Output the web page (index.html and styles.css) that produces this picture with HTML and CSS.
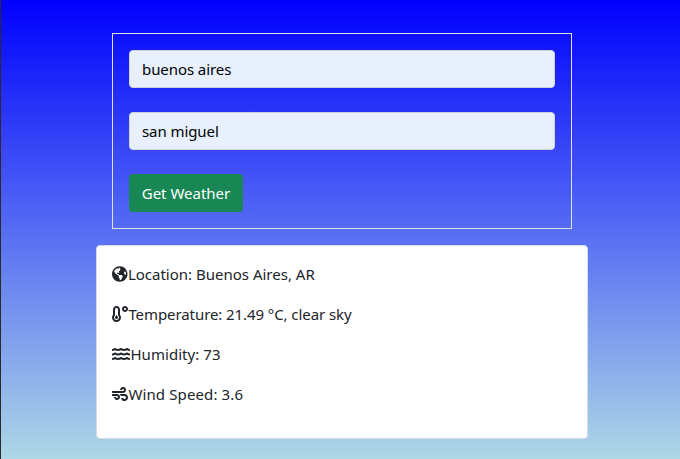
FILE: index.html
```html
<!DOCTYPE html>
<html lang="en">
<head>
<meta charset="utf-8">
<title>Weather</title>
<link rel="stylesheet" href="styles.css">
</head>
<body>
<main class="container">
  <form class="search">
    <input class="field" type="text" value="buenos aires" aria-label="City">
    <input class="field field-state" type="text" value="san miguel" aria-label="State">
    <button class="submit" type="button">Get Weather</button>
  </form>
  <section class="card">
    <p class="row"><svg class="icon icon-globe" viewBox="0 0 496 512"><path d="M248 8C111.03 8 0 119.03 0 256s111.03 248 248 248 248-111.03 248-248S384.97 8 248 8zm82.29 357.6c-3.9 3.88-7.99 7.95-11.31 11.28-2.99 3-5.1 6.7-6.17 10.71-1.51 5.66-2.73 11.38-4.77 16.87l-17.39 46.85c-13.76 3-28 4.69-42.65 4.69v-27.38c1.69-12.62-7.64-36.26-22.63-51.25-6-6-9.37-14.14-9.37-22.63v-32.01c0-11.64-6.27-22.34-16.46-27.97-14.37-7.95-34.81-19.06-48.81-26.11-11.48-5.78-22.1-13.14-31.65-21.75l-.8-.72a114.792 114.792 0 0 1-18.06-20.74c-9.38-13.77-24.66-36.42-34.59-51.14 20.47-45.5 57.36-82.04 103.2-101.89l24.01 12.01C203.48 89.74 216 82.01 216 70.11v-11.3c7.99-1.29 16.12-2.11 24.39-2.42l28.3 28.3c6.25 6.25 6.25 16.38 0 22.63L264 112l-10.34 10.34c-3.12 3.12-3.12 8.19 0 11.31l4.69 4.69c3.12 3.12 3.12 8.19 0 11.31l-8 8a8.008 8.008 0 0 1-5.66 2.34h-8.99c-2.08 0-4.08.81-5.58 2.27l-9.92 9.65a8.008 8.008 0 0 0-1.58 9.31l15.59 31.19c2.66 5.32-1.21 11.58-7.15 11.58h-5.64c-1.93 0-3.79-.7-5.24-1.96l-9.28-8.06a16.017 16.017 0 0 0-15.55-3.1l-31.17 10.39a11.95 11.95 0 0 0-8.17 11.34c0 4.53 2.56 8.66 6.61 10.69l11.08 5.54c9.41 4.71 19.79 7.16 30.31 7.16s22.59 27.29 32 32h66.75c8.49 0 16.62 3.37 22.63 9.37l13.69 13.69a30.503 30.503 0 0 1 8.93 21.57 46.536 46.536 0 0 1-13.72 32.98zM417 274.25c-5.79-1.45-10.84-5-14.15-9.97l-17.98-26.97a23.97 23.97 0 0 1 0-26.62l19.59-29.38c2.32-3.47 5.5-6.29 9.24-8.15l12.98-6.49C440.2 193.59 448 223.87 448 256c0 8.67-.74 17.16-1.82 25.54L417 274.25z"/></svg><span class="location">Location: Buenos Aires, AR</span></p>
    <p class="row"><svg class="icon" viewBox="0 0 512 512"><path d="M416 0c-52.9 0-96 43.1-96 96s43.1 96 96 96 96-43.1 96-96-43.1-96-96-96zm0 128c-17.7 0-32-14.3-32-32s14.3-32 32-32 32 14.3 32 32-14.3 32-32 32zm-160-16C256 50.1 205.9 0 144 0S32 50.1 32 112v166.5C12.3 303.2 0 334 0 368c0 79.5 64.5 144 144 144s144-64.5 144-144c0-34-12.3-64.9-32-89.5V112zM144 448c-44.1 0-80-35.9-80-80 0-25.5 12.2-48.9 32-63.8V112c0-26.5 21.5-48 48-48s48 21.5 48 48v192.2c19.8 14.8 32 38.3 32 63.8 0 44.1-35.9 80-80 80zm16-125.1V304c0-8.8-7.2-16-16-16s-16 7.2-16 16v18.9c-18.6 6.6-32 24.2-32 45.1 0 26.5 21.5 48 48 48s48-21.5 48-48c0-20.9-13.4-38.5-32-45.1z"/></svg><span class="temperature">Temperature: 21.49 °C, clear sky</span></p>
    <p class="row"><svg class="icon icon-water" viewBox="0 0 576 512"><defs><path id="wave" d="M562.1 383.9c-21.5-2.4-42.1-10.5-57.9-22.9-14.1-11.1-34.2-11.3-48.2 0-37.9 30.4-107.2 30.4-145.7-1.5-13.5-11.2-33-9.1-46.7 1.8-38 30.1-106.9 30-145.2-1.7-13.5-11.2-33.3-8.9-47.1 2-15.5 12.2-36 20.1-57.7 22.4-7.9.8-13.6 7.8-13.6 15.7v32.2c0 9.1 7.6 16.8 16.7 16 28.8-2.5 56.1-11.4 79.4-25.9 56.5 34.6 137 34.1 192 0 56.5 34.6 137 34.1 192 0 23.3 14.2 50.9 23.3 79.1 25.8 9.1.8 16.7-6.9 16.7-16v-31.6c.1-8-5.7-15.4-13.8-16.3z"/></defs><use href="#wave"/><use href="#wave" y="-144"/><use href="#wave" y="-288"/></svg><span class="humidity">Humidity: 73</span></p>
    <p class="row"><svg class="icon" viewBox="0 0 512 512"><path d="M156.7 256H16c-8.8 0-16 7.2-16 16v32c0 8.8 7.2 16 16 16h142.2c15.9 0 30.8 10.9 33.4 26.6 3.3 20-12.1 37.4-31.6 37.4-14.1 0-26.1-9.2-30.4-21.9-2.1-6.3-8.6-10.1-15.2-10.1H81.6c-9.8 0-17.7 8.8-15.9 18.4 8.6 44.1 47.6 77.6 94.2 77.6 57.1 0 102.7-50.1 95.2-108.6C249 291 205.4 256 156.7 256zM16 224h336c59.7 0 106.8-54.8 93.8-116.7-7.6-36.2-36.9-65.5-73.1-73.1-55.4-11.6-105.1 24.9-114.9 75.5-1.9 9.6 6.1 18.3 15.8 18.3h32.8c6.7 0 13.1-3.8 15.2-10.1C325.9 105.2 337.9 96 352 96c19.4 0 34.9 17.4 31.6 37.4-2.6 15.7-17.4 26.6-33.4 26.6H16c-8.8 0-16 7.2-16 16v32c0 8.8 7.2 16 16 16zm384 32H243.7c19.3 16.6 33.2 38.8 39.8 64H400c26.5 0 48 21.5 48 48s-21.5 48-48 48c-17.9 0-33.3-9.9-41.6-24.4-2.9-5-8.7-7.6-14.5-7.6h-33.8c-10.9 0-19 10.8-15.3 21.1 17.8 50.6 70.5 84.8 129.4 72.3 41.2-8.7 75.1-41.6 84.7-82.7C526 321.5 470.5 256 400 256z"/></svg><span class="wind">Wind Speed: 3.6</span></p>
  </section>
</main>
</body>
</html>
```
FILE: styles.css
```css
* { box-sizing: border-box; }

body {
  margin: 0;
  height: 459px;
  overflow: hidden;
  border-left: 1px solid #292a2d;
  background: linear-gradient(blue, lightblue);
  font-family: "Noto Sans", sans-serif;
  font-size: 15px;
  line-height: 24px;
  color: #212529;
}

.container {
  width: 492px;
  margin-left: 95px;
  padding-top: 33px;
}

.search {
  display: flex;
  flex-direction: column;
  align-items: flex-start;
  gap: 24px;
  height: 196px;
  margin: 0 16px 16px;
  padding: 16px;
  border: 1px solid #dee2e6;
}

.field {
  width: 100%;
  height: 38px;
  padding: 6px 12px;
  border: 1px solid #ced4da;
  border-radius: 4px;
  background: #e8f0fe;
  color: #000;
  font: inherit;
  letter-spacing: -0.08px;
}

.submit {
  width: 114px;
  height: 38px;
  padding: 0;
  border: 0;
  border-radius: 4px;
  background: #198754;
  color: #fff;
  font: inherit;
  white-space: nowrap;
}

.card {
  height: 194px;
  padding: 16px;
  border: 1px solid #d6d9e6;
  border-radius: 4px;
  background: #fff;
}

.row {
  display: flex;
  align-items: center;
  height: 24px;
  margin: 0 0 16px;
  white-space: nowrap;
}

.icon {
  flex: none;
  width: 16px;
  height: 16px;
  margin-left: -0.6px;
  fill: currentColor;
}

.icon-globe { width: 15.5px; }
.icon-water { width: 18px; }

.temperature { letter-spacing: -0.08px; }
.humidity { letter-spacing: 0.05px; }
.wind { letter-spacing: 0.12px; }
```
